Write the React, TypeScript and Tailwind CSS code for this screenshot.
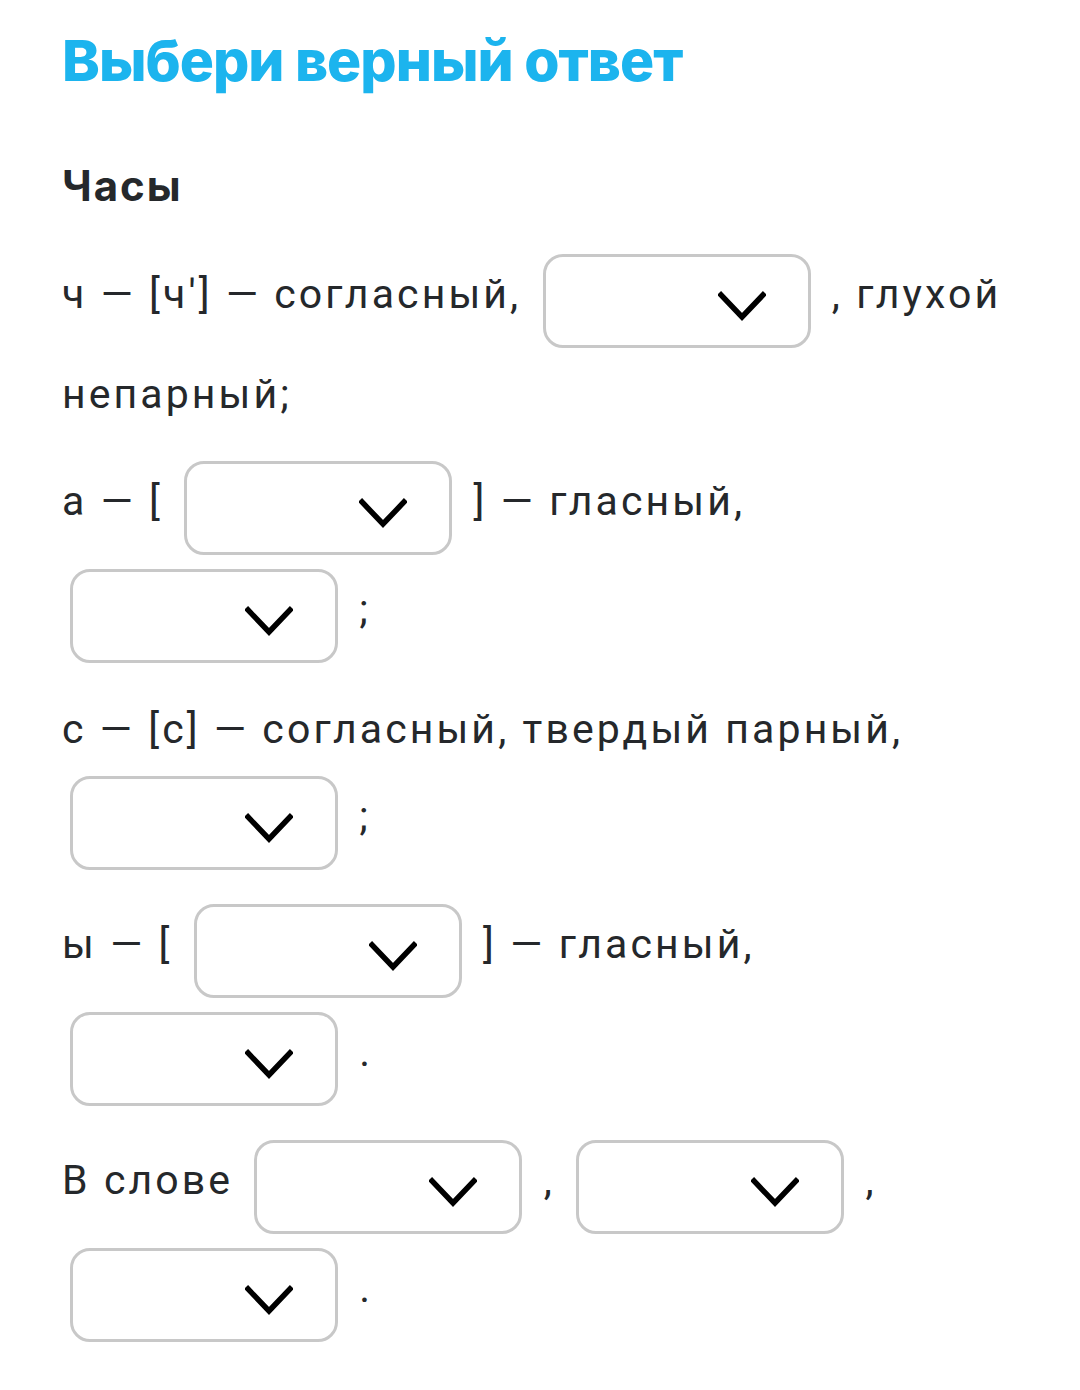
import React from "react";

function Sel() {
  return (
    <span className="inline-block overflow-hidden align-[-47px] my-[7px] mx-2 w-[268px] h-[94px] rounded-[20px] border-[3px] border-[#c8c8c8] bg-white relative">
      <svg
        className="absolute right-[42px] top-[34px]"
        width="48"
        height="30"
        viewBox="0 0 48 30"
        fill="none"
      >
        <path d="M3 4 L24 26 L45 4" stroke="#000" strokeWidth="5.5" strokeLinecap="square" strokeLinejoin="miter" />
      </svg>
    </span>
  );
}

function SelP({ p }: { p: string }) {
  return (
    <span className="whitespace-nowrap">
      <Sel /> {p}
    </span>
  );
}

export default function App() {
  return (
    <div className="min-h-[1390px] w-[1080px] bg-white pl-[62px] pr-[40px] pt-[21px] text-[#25282b] font-['Roboto',sans-serif]">
      <h1 className="font-['Inter',sans-serif] font-extrabold text-[#1cb4ee] text-[57px] leading-[80px] tracking-[-1px]">
        Выбери верный ответ
      </h1>
      <div className="mt-[55px] font-['Inter',sans-serif] font-bold text-[42px] leading-[60px] tracking-[2px]">Часы</div>
      <div className="mt-[31px] text-[41px] leading-[79px] tracking-[3.1px]">
        <p className="mb-[20px]">
          ч — [ч'] — согласный, <Sel /> , глухой непарный;
        </p>
        <p className="mb-[20px]">
          а — [ <Sel /> ] — гласный, <SelP p=";" />
        </p>
        <p className="mb-[20px]">
          с — [с] — согласный, твердый парный, <SelP p=";" />
        </p>
        <p className="mb-[20px]">
          ы — [ <Sel /> ] — гласный, <SelP p="." />
        </p>
        <p className="mb-[20px]">
          В слове <Sel /> , <SelP p="," /> <SelP p="." />
        </p>
      </div>
    </div>
  );
}
